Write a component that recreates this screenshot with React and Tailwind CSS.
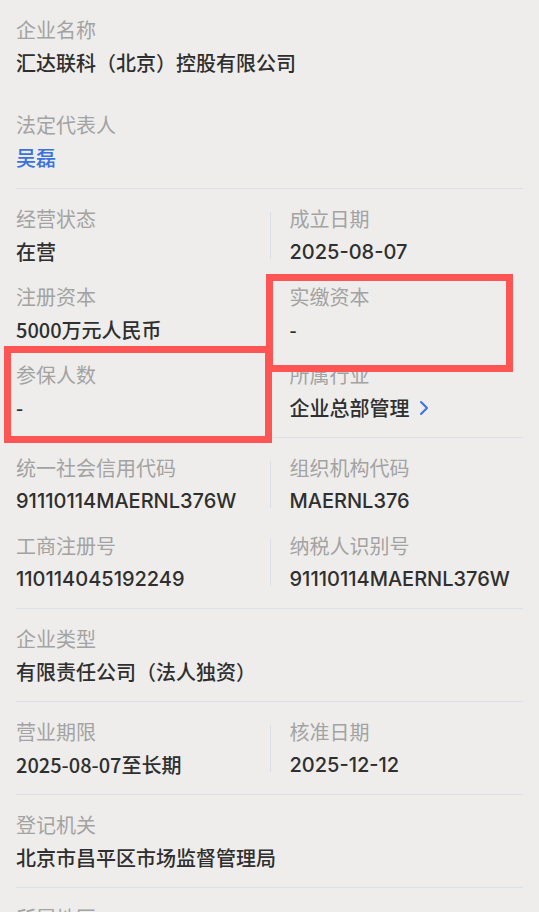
import React from "react";

const font = { fontFamily: '"Noto Sans CJK SC", "Noto Sans", sans-serif' };
// digits and latin letters look wider in the screenshot
const latin = { fontFamily: 'Inter, "Noto Sans CJK SC", sans-serif' };

function Field({ label, value, blue, arrow, num }) {
  return (
    <div>
      <div className="text-[20px] leading-[28px] text-[#a3a3a3]">{label}</div>
      <div
        className={`mt-[5px] text-[20px] leading-[28px] font-medium flex items-center ${
          blue ? "text-[#3a72de]" : "text-[#2f2f2f]"
        }`}
      >
        <span style={num ? latin : undefined}>{value}</span>
        {arrow && (
          <svg width="10" height="16" viewBox="0 0 10 16" className="ml-[9px]">
            <path
              d="M2 2 L8 8 L2 14"
              fill="none"
              stroke="#3a72de"
              strokeWidth="2"
              strokeLinecap="round"
              strokeLinejoin="round"
            />
          </svg>
        )}
      </div>
    </div>
  );
}

function Row({ left, right, line = true }) {
  return (
    <div className="grid grid-cols-2">
      <div>
        <Field {...left} />
      </div>
      <div className="relative pl-[20px]">
        {line && (
          <div className="absolute left-0 top-[7px] bottom-[7px] w-px bg-[#dcdfe6]" />
        )}
        <Field {...right} />
      </div>
    </div>
  );
}

function Section({ children, last }) {
  return (
    <div
      className={`pt-[16px] pb-[15px] flex flex-col gap-[17px] ${
        last ? "" : "border-b border-[#dde0e7]"
      }`}
    >
      {children}
    </div>
  );
}

export default function App() {
  return (
    <div className="relative min-h-[912px] bg-[#eeedeb] px-[16px]" style={font}>
      <div className="pt-[16px] pb-[16px] flex flex-col gap-[34px] border-b border-[#dde0e7]">
        <Field label="企业名称" value="汇达联科（北京）控股有限公司" />
        <Field label="法定代表人" value="吴磊" blue />
      </div>

      <Section>
        <Row
          left={{ label: "经营状态", value: "在营" }}
          right={{ label: "成立日期", value: "2025-08-07", num: true }}
        />
        <Row
          line={false}
          left={{ label: "注册资本", value: "5000万元人民币" }}
          right={{ label: "实缴资本", value: "-" }}
        />
        <Row
          line={false}
          left={{ label: "参保人数", value: "-" }}
          right={{ label: "所属行业", value: "企业总部管理", arrow: true }}
        />
      </Section>

      <Section>
        <Row
          left={{ label: "统一社会信用代码", value: "91110114MAERNL376W", num: true }}
          right={{ label: "组织机构代码", value: "MAERNL376", num: true }}
        />
        <Row
          left={{ label: "工商注册号", value: "110114045192249", num: true }}
          right={{ label: "纳税人识别号", value: "91110114MAERNL376W", num: true }}
        />
      </Section>

      <Section>
        <Field label="企业类型" value="有限责任公司（法人独资）" />
      </Section>

      <Section>
        <Row
          left={{ label: "营业期限", value: "2025-08-07至长期" }}
          right={{ label: "核准日期", value: "2025-12-12", num: true }}
        />
      </Section>

      <Section>
        <Field label="登记机关" value="北京市昌平区市场监督管理局" />
      </Section>

      <Section last>
        <Field label="所属地区" value="北京市昌平区" />
      </Section>

      {/* annotation boxes */}
      <div className="absolute left-[266px] top-[274px] w-[247px] h-[98px] border-[7px] border-[#fd5454]" />
      <div className="absolute left-[4px] top-[346px] w-[268px] h-[97px] border-[7px] border-[#fd5454]" />
    </div>
  );
}
